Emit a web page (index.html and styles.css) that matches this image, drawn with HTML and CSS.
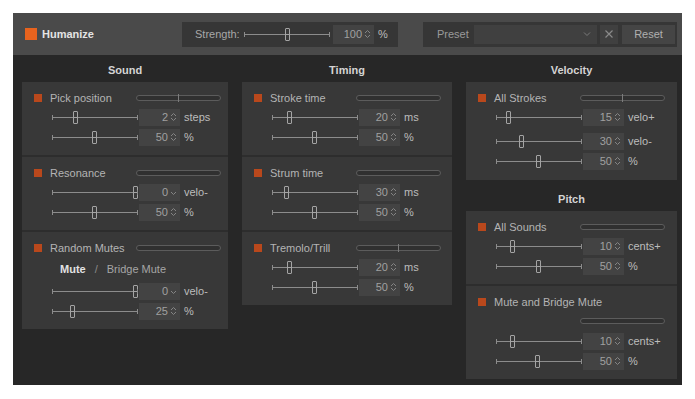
FILE: index.html
```html
<!DOCTYPE html>
<html>
<head>
<meta charset="utf-8">
<link rel="stylesheet" href="styles.css">
</head>
<body>
<div class="app">
  <header class="top">
    <div class="brand"><span class="sq-big"></span><span class="brand-name">Humanize</span></div>
    <div class="strength">
      <span class="st-label">Strength:</span>
      <span class="slider st-slider"><i class="thumb" style="left:43px"></i></span>
      <span class="num big">100<svg class="spin" viewBox="0 0 7 10"><path d="M1 4 L3.5 1.5 L6 4 M1 6 L3.5 8.5 L6 6"/></svg></span>
      <span class="unit">%</span>
    </div>
    <div class="preset">
      <span class="pr-label">Preset</span>
      <span class="dropdown"><svg class="chev" viewBox="0 0 8 6"><path d="M1 1.5 L4 4.5 L7 1.5"/></svg></span>
      <span class="xbtn"><svg viewBox="0 0 10 10"><path d="M1.5 1.5 L8.5 8.5 M8.5 1.5 L1.5 8.5"/></svg></span>
      <span class="reset">Reset</span>
    </div>
  </header>

  <main class="cols">
    <section class="col c1">
      <h2 class="col-title">Sound</h2>
      <div class="card">
        <div class="sec">
          <div class="sec-head"><span class="dot"></span><span class="lbl">Pick position</span><span class="meter"><b class="tick"></b></span></div>
          <div class="row"><span class="slider"><i class="thumb" style="left:23px"></i></span><span class="num">2<svg class="spin" viewBox="0 0 7 10"><path d="M1 4 L3.5 1.5 L6 4 M1 6 L3.5 8.5 L6 6"/></svg></span><span class="unit">steps</span></div>
          <div class="row"><span class="slider"><i class="thumb" style="left:42px"></i></span><span class="num">50<svg class="spin" viewBox="0 0 7 10"><path d="M1 4 L3.5 1.5 L6 4 M1 6 L3.5 8.5 L6 6"/></svg></span><span class="unit">%</span></div>
        </div>
        <div class="sec">
          <div class="sec-head"><span class="dot"></span><span class="lbl">Resonance</span><span class="meter"></span></div>
          <div class="row"><span class="slider"><i class="thumb" style="left:83px"></i></span><span class="num">0<svg class="spin" viewBox="0 0 7 10"><path d="M1 5 L3.5 7.5 L6 5"/></svg></span><span class="unit">velo-</span></div>
          <div class="row"><span class="slider"><i class="thumb" style="left:42px"></i></span><span class="num">50<svg class="spin" viewBox="0 0 7 10"><path d="M1 4 L3.5 1.5 L6 4 M1 6 L3.5 8.5 L6 6"/></svg></span><span class="unit">%</span></div>
        </div>
        <div class="sec">
          <div class="sec-head"><span class="dot"></span><span class="lbl">Random Mutes</span><span class="meter"></span></div>
          <div class="mute-row"><span class="mute-on">Mute</span><span class="slash">/</span><span class="mute-off">Bridge Mute</span></div>
          <div class="row"><span class="slider"><i class="thumb" style="left:83px"></i></span><span class="num">0<svg class="spin" viewBox="0 0 7 10"><path d="M1 5 L3.5 7.5 L6 5"/></svg></span><span class="unit">velo-</span></div>
          <div class="row"><span class="slider"><i class="thumb" style="left:20px"></i></span><span class="num">25<svg class="spin" viewBox="0 0 7 10"><path d="M1 4 L3.5 1.5 L6 4 M1 6 L3.5 8.5 L6 6"/></svg></span><span class="unit">%</span></div>
        </div>
      </div>
    </section>

    <section class="col c2">
      <h2 class="col-title">Timing</h2>
      <div class="card">
        <div class="sec">
          <div class="sec-head"><span class="dot"></span><span class="lbl">Stroke time</span><span class="meter"></span></div>
          <div class="row"><span class="slider"><i class="thumb" style="left:17px"></i></span><span class="num">20<svg class="spin" viewBox="0 0 7 10"><path d="M1 4 L3.5 1.5 L6 4 M1 6 L3.5 8.5 L6 6"/></svg></span><span class="unit">ms</span></div>
          <div class="row"><span class="slider"><i class="thumb" style="left:42px"></i></span><span class="num">50<svg class="spin" viewBox="0 0 7 10"><path d="M1 4 L3.5 1.5 L6 4 M1 6 L3.5 8.5 L6 6"/></svg></span><span class="unit">%</span></div>
        </div>
        <div class="sec">
          <div class="sec-head"><span class="dot"></span><span class="lbl">Strum time</span><span class="meter"></span></div>
          <div class="row"><span class="slider"><i class="thumb" style="left:14px"></i></span><span class="num">30<svg class="spin" viewBox="0 0 7 10"><path d="M1 4 L3.5 1.5 L6 4 M1 6 L3.5 8.5 L6 6"/></svg></span><span class="unit">ms</span></div>
          <div class="row"><span class="slider"><i class="thumb" style="left:42px"></i></span><span class="num">50<svg class="spin" viewBox="0 0 7 10"><path d="M1 4 L3.5 1.5 L6 4 M1 6 L3.5 8.5 L6 6"/></svg></span><span class="unit">%</span></div>
        </div>
        <div class="sec">
          <div class="sec-head"><span class="dot"></span><span class="lbl">Tremolo/Trill</span><span class="meter"><b class="tick"></b></span></div>
          <div class="row"><span class="slider"><i class="thumb" style="left:17px"></i></span><span class="num">20<svg class="spin" viewBox="0 0 7 10"><path d="M1 4 L3.5 1.5 L6 4 M1 6 L3.5 8.5 L6 6"/></svg></span><span class="unit">ms</span></div>
          <div class="row"><span class="slider"><i class="thumb" style="left:42px"></i></span><span class="num">50<svg class="spin" viewBox="0 0 7 10"><path d="M1 4 L3.5 1.5 L6 4 M1 6 L3.5 8.5 L6 6"/></svg></span><span class="unit">%</span></div>
        </div>
      </div>
    </section>

    <section class="col c3">
      <h2 class="col-title">Velocity</h2>
      <div class="card">
        <div class="sec vel">
          <div class="sec-head"><span class="dot"></span><span class="lbl">All Strokes</span><span class="meter"><b class="tick"></b></span></div>
          <div class="row"><span class="slider"><i class="thumb" style="left:12px"></i></span><span class="num">15<svg class="spin" viewBox="0 0 7 10"><path d="M1 4 L3.5 1.5 L6 4 M1 6 L3.5 8.5 L6 6"/></svg></span><span class="unit">velo+</span></div>
          <div class="row spaced"><span class="slider"><i class="thumb" style="left:25px"></i></span><span class="num">30<svg class="spin" viewBox="0 0 7 10"><path d="M1 4 L3.5 1.5 L6 4 M1 6 L3.5 8.5 L6 6"/></svg></span><span class="unit">velo-</span></div>
          <div class="row"><span class="slider"><i class="thumb" style="left:42px"></i></span><span class="num">50<svg class="spin" viewBox="0 0 7 10"><path d="M1 4 L3.5 1.5 L6 4 M1 6 L3.5 8.5 L6 6"/></svg></span><span class="unit">%</span></div>
        </div>
      </div>
      <h2 class="col-title sub">Pitch</h2>
      <div class="card">
        <div class="sec">
          <div class="sec-head"><span class="dot"></span><span class="lbl">All Sounds</span><span class="meter"></span></div>
          <div class="row"><span class="slider"><i class="thumb" style="left:16px"></i></span><span class="num">10<svg class="spin" viewBox="0 0 7 10"><path d="M1 4 L3.5 1.5 L6 4 M1 6 L3.5 8.5 L6 6"/></svg></span><span class="unit">cents+</span></div>
          <div class="row"><span class="slider"><i class="thumb" style="left:42px"></i></span><span class="num">50<svg class="spin" viewBox="0 0 7 10"><path d="M1 4 L3.5 1.5 L6 4 M1 6 L3.5 8.5 L6 6"/></svg></span><span class="unit">%</span></div>
        </div>
        <div class="sec">
          <div class="sec-head"><span class="dot"></span><span class="lbl wide">Mute and Bridge Mute</span></div>
          <div class="meter-row"><span class="meter"></span></div>
          <div class="row"><span class="slider"><i class="thumb" style="left:16px"></i></span><span class="num">10<svg class="spin" viewBox="0 0 7 10"><path d="M1 4 L3.5 1.5 L6 4 M1 6 L3.5 8.5 L6 6"/></svg></span><span class="unit">cents+</span></div>
          <div class="row"><span class="slider"><i class="thumb" style="left:41px"></i></span><span class="num">50<svg class="spin" viewBox="0 0 7 10"><path d="M1 4 L3.5 1.5 L6 4 M1 6 L3.5 8.5 L6 6"/></svg></span><span class="unit">%</span></div>
        </div>
      </div>
    </section>
  </main>
</div>
</body>
</html>
```

FILE: styles.css
```css
* { box-sizing: border-box; }
html, body { margin: 0; padding: 0; background: #ffffff; }
body {
  padding: 13px 0 0 13px;
  font-family: "Liberation Sans", Arial, sans-serif;
  font-size: 11px;
  color: #b4b4b4;
}
.app {
  width: 669px;
  height: 372px;
  background: #272727;
  display: flex;
  flex-direction: column;
  overflow: hidden;
}

/* header */
.top {
  height: 42px;
  background: #4a4a4a;
  display: flex;
  align-items: center;
  padding: 0 5px 0 12px;
  flex: none;
}
.brand { width: 157px; display: flex; align-items: center; }
.sq-big { width: 12px; height: 12px; background: #e8631e; margin-right: 5px; }
.brand-name { font-weight: bold; color: #e4e4e4; }

.strength {
  width: 216px;
  height: 25px;
  background: #363636;
  display: flex;
  align-items: center;
  padding-left: 13px;
}
.st-label { width: 49px; color: #a8a8a8; }
.st-slider { width: 85px; }
.num.big { height: 19px; margin-left: 3px; }

.preset {
  width: 254px;
  height: 25px;
  margin-left: 25px;
  background: #363636;
  display: flex;
  align-items: center;
  padding-left: 14px;
}
.pr-label { width: 37px; color: #9a9a9a; }
.dropdown {
  width: 123px;
  height: 19px;
  background: #404040;
  display: flex;
  align-items: center;
  justify-content: flex-end;
  padding-right: 6px;
}
.chev { width: 8px; height: 6px; fill: none; stroke: #7a7a7a; stroke-width: 1; }
.xbtn {
  width: 18px;
  height: 19px;
  margin-left: 3px;
  background: #404040;
  display: flex;
  align-items: center;
  justify-content: center;
}
.xbtn svg { width: 10px; height: 10px; fill: none; stroke: #8a8a8a; stroke-width: 1.2; }
.reset {
  width: 53px;
  height: 19px;
  margin-left: 4px;
  background: #454545;
  color: #b0b0b0;
  display: flex;
  align-items: center;
  justify-content: center;
}

/* columns */
.cols {
  display: grid;
  grid-template-columns: 206px 210px 211px;
  column-gap: 14px;
  padding-left: 9px;
  align-items: start;
}
.col-title {
  margin: 0;
  padding: 8px 0 5px;
  height: 27px;
  line-height: 14px;
  font-size: 11px;
  font-weight: bold;
  color: #d4d4d4;
  text-align: center;
}
.col-title.sub { padding-top: 12px; height: 31px; }

.card { background: #383838; }
.sec { padding: 9px 0 8px; }
.sec + .sec { border-top: 2px solid #2d2d2d; }
.sec.vel { padding-bottom: 9px; }

.sec-head {
  height: 14px;
  display: flex;
  align-items: center;
  padding-left: 12px;
  margin-bottom: 2px;
}
.dot { width: 8px; height: 8px; background: #b9481c; flex: none; }
.lbl { width: 86px; margin-left: 8px; white-space: nowrap; color: #b4b4b4; flex: none; }
.lbl.wide { width: auto; }

.meter {
  width: 85px;
  height: 6px;
  border: 1px solid #5c5c5c;
  border-radius: 3px;
  background: #303030;
  position: relative;
  flex: none;
}
.tick {
  position: absolute;
  left: 41px;
  top: -2px;
  width: 1px;
  height: 8px;
  background: #7c7c7c;
}
.meter-row { height: 20px; display: flex; align-items: center; padding-left: 114px; margin-top: 2px; }

.row {
  height: 20px;
  display: flex;
  align-items: center;
  padding-left: 30px;
}
.row.spaced { margin-top: 4px; }

.slider {
  width: 86px;
  height: 13px;
  position: relative;
  flex: none;
  background: linear-gradient(#8c8c8c, #8c8c8c) 0 6px / 100% 1px no-repeat;
}
.slider::before, .slider::after {
  content: "";
  position: absolute;
  top: 4px;
  width: 1px;
  height: 5px;
  background: #8c8c8c;
}
.slider::before { left: 0; }
.slider::after { right: 0; }
.thumb {
  position: absolute;
  top: 0;
  width: 5px;
  height: 13px;
  margin-left: -2px;
  border: 1px solid #a4a4a4;
  border-radius: 1px;
  background: #3a3a3a;
}
.thumb::after {
  content: "";
  position: absolute;
  left: 0;
  right: 0;
  top: 5px;
  height: 1px;
  background: #a4a4a4;
}

.num {
  width: 41px;
  height: 17px;
  margin-left: 1px;
  background: #434343;
  color: #a0a0a0;
  display: flex;
  align-items: center;
  justify-content: flex-end;
  padding-right: 3px;
  flex: none;
}
.spin {
  width: 7px;
  height: 10px;
  margin-left: 2px;
  fill: none;
  stroke: #858585;
  stroke-width: 1;
}
.unit { margin-left: 4px; color: #bcbcbc; white-space: nowrap; }

.mute-row {
  height: 24px;
  display: flex;
  align-items: center;
  padding-left: 38px;
}
.mute-on { font-weight: bold; color: #e2e2e2; }
.slash { margin: 0 9px; color: #8a8a8a; }
.mute-off { color: #a6a6a6; }
```
